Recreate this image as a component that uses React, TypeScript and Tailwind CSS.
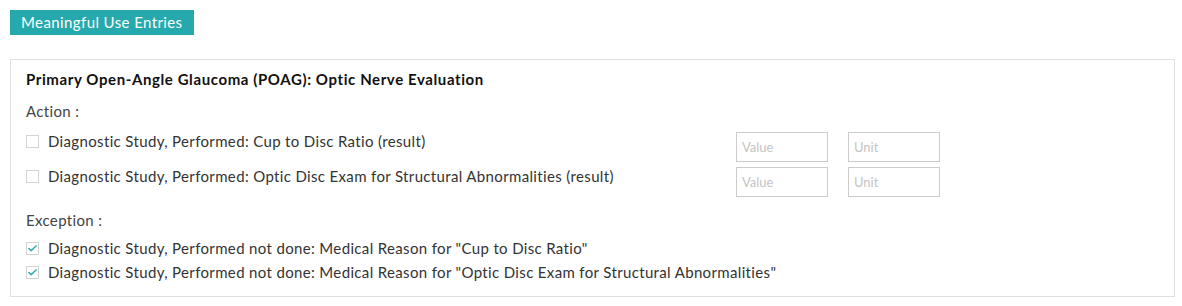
import { Check } from "lucide-react";

const actions = [
  "Diagnostic Study, Performed: Cup to Disc Ratio (result)",
  "Diagnostic Study, Performed: Optic Disc Exam for Structural Abnormalities (result)",
];

const exceptions = [
  'Diagnostic Study, Performed not done: Medical Reason for "Cup to Disc Ratio"',
  'Diagnostic Study, Performed not done: Medical Reason for "Optic Disc Exam for Structural Abnormalities"',
];

function Box({ checked }: { checked?: boolean }) {
  return (
    <span className="w-[13px] h-[13px] border border-[#d4d4d4] bg-white flex items-center justify-center shrink-0">
      {checked && <Check className="w-[11px] h-[11px] text-[#26a9ad]" strokeWidth={3} />}
    </span>
  );
}

export default function App() {
  return (
    <div className="bg-white w-[1182px] h-[306px] pt-[10px] px-[10px] font-['Lato',sans-serif] text-[#333]">
      <div className="inline-flex items-center h-[25px] px-[11px] bg-[#26a9ad] text-white text-[15px] tracking-[0.4px]">
        Meaningful Use Entries
      </div>

      <div className="mt-[24px] w-[1165px] border border-[#e0e0e0] pt-[9px] pb-[12px] px-[15px]">
        <h2 className="text-[15px] font-bold leading-[20px] text-[#111] tracking-[0.6px]">
          Primary Open-Angle Glaucoma (POAG): Optic Nerve Evaluation
        </h2>

        <div className="mt-[12px] text-[15px] leading-[20px] text-[#444] tracking-[0.35px]">Action :</div>
        <div className="mt-[11px] flex flex-col gap-[5px]">
          {actions.map((a) => (
            <div key={a} className="flex items-start">
              <label className="w-[710px] flex items-center gap-[9px] leading-[19px] text-[15px] tracking-[0.35px]">
                <Box />
                <span>{a}</span>
              </label>
              <div className="flex gap-[20px]">
                <input
                  placeholder="Value"
                  className="w-[92px] h-[30px] border border-[#ccc] px-[5px] text-[13px] placeholder:text-[#c4c4c4] outline-none"
                />
                <input
                  placeholder="Unit"
                  className="w-[92px] h-[30px] border border-[#ccc] px-[5px] text-[13px] placeholder:text-[#c4c4c4] outline-none"
                />
              </div>
            </div>
          ))}
        </div>

        <div className="mt-[13px] text-[15px] leading-[20px] text-[#444] tracking-[0.35px]">Exception :</div>
        <div className="mt-[6px] flex flex-col">
          {exceptions.map((e) => (
            <label key={e} className="flex items-center gap-[9px] leading-[24px] text-[15px] tracking-[0.35px]">
              <Box checked />
              <span>{e}</span>
            </label>
          ))}
        </div>
      </div>
    </div>
  );
}
